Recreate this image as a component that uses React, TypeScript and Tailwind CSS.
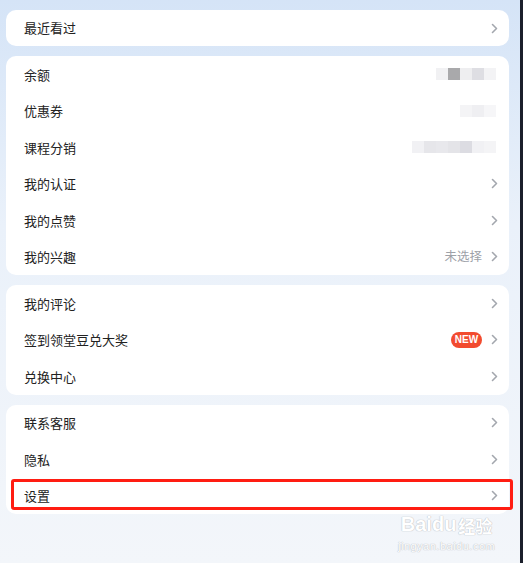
import { ReactNode } from 'react';

// Small right-pointing chevron used at the end of every row
function Chevron() {
    return (
        <svg width="7" height="11" viewBox="0 0 7 11" className="shrink-0">
            <path d="M1.5 1.5 L5.5 5.5 L1.5 9.5" fill="none" stroke="#a3a7ae" strokeWidth="1.6" strokeLinecap="round" strokeLinejoin="round" />
        </svg>
    );
}

function Row({ label, right, chevron = true, tall = false }: { label: string; right?: ReactNode; chevron?: boolean; tall?: boolean }) {
    return (
        <div className={`flex items-center justify-between pl-[18px] pr-[11px] ${tall ? 'h-9' : 'h-[36.5px]'}`}>
            <span className="text-[13px] text-[#222]">{label}</span>
            <div className="flex items-center gap-[9px]">
                {right}
                {chevron && <Chevron />}
            </div>
        </div>
    );
}

// Pixelated "blurred" placeholder that hides a value
function Mosaic({ cells }: { cells: string[] }) {
    return (
        <div className="flex blur-[0.6px]">
            {cells.map((c, i) => (
                <div key={i} className="w-3 h-3" style={{ backgroundColor: c }} />
            ))}
        </div>
    );
}

export default function App() {
    return (
        <div className="flex w-[523px] h-[563px] overflow-hidden" style={{ fontFamily: '"Noto Sans CJK SC", "Noto Sans", sans-serif' }}>
            <div className="relative flex-1 bg-gradient-to-b from-[#d5e4f7] via-[#eaf1fa] via-40% to-[#f3f6fa] pt-[10px] pl-[6px] pr-[11px]">
                <div className="flex flex-col gap-[10px]">
                    {/* Recently viewed */}
                    <section className="bg-white rounded-[10px]">
                        <Row label="最近看过" tall />
                    </section>

                    {/* Wallet & profile */}
                    <section className="bg-white rounded-[10px]">
                        <Row label="余额" chevron={false} right={<div className="mr-[2px]"><Mosaic cells={['#f1f1f3', '#a9a9ab', '#eeeef0', '#dedee3', '#f3f3f5']} /></div>} />
                        <Row label="优惠券" chevron={false} right={<div className="mr-[2px]"><Mosaic cells={['#f4f4f6', '#efeff2', '#f6f6f8']} /></div>} />
                        <Row label="课程分销" chevron={false} right={<div className="mr-[2px]"><Mosaic cells={['#f1f1f4', '#e6e6ea', '#e8e8ec', '#e4e4e8', '#dcdce2', '#f1f1f4', '#f4f4f6']} /></div>} />
                        <Row label="我的认证" />
                        <Row label="我的点赞" />
                        <Row label="我的兴趣" right={<span className="text-[12.5px] text-[#9da1a8]">未选择</span>} />
                    </section>

                    {/* Activity */}
                    <section className="bg-white rounded-[10px]">
                        <Row label="我的评论" />
                        <Row
                            label="签到领堂豆兑大奖"
                            right={
                                <span className="flex items-center justify-center w-[31px] h-4 rounded-full bg-[#f24b2f] text-white text-[10px] font-semibold leading-none" style={{ fontFamily: '"Liberation Sans", sans-serif' }}>
                                    NEW
                                </span>
                            }
                        />
                        <Row label="兑换中心" />
                    </section>

                    {/* Service */}
                    <section className="relative bg-white rounded-[10px]">
                        <Row label="联系客服" />
                        <Row label="隐私" />
                        <Row label="设置" />
                        {/* highlight annotation over the settings row */}
                        <div className="absolute left-[5px] -right-[4px] bottom-[4px] h-[31px] border-[3px] border-[#ff1d12] rounded-[3px] pointer-events-none" />
                    </section>
                </div>

                {/* Baidu jingyan watermark */}
                <div className="absolute left-[398px] top-[514px] flex flex-col items-center text-white [text-shadow:0_0_1px_#b9bcc2,0_0_1px_#b9bcc2] pointer-events-none" style={{ fontFamily: '"Liberation Sans", sans-serif' }}>
                    <div className="flex items-end leading-none">
                        <span className="text-[20px] font-bold">Bai</span>
                        <span className="text-[20px] font-bold">du</span>
                        <span className="text-[17px] font-bold ml-[2px]" style={{ fontFamily: '"Noto Sans CJK SC", sans-serif' }}>经验</span>
                    </div>
                    <span className="text-[11px] mt-[4px] tracking-[0.5px]">jingyan.baidu.com</span>
                </div>
            </div>
            <div className="w-[3px] bg-[#1b1f2b]" />
        </div>
    );
}
